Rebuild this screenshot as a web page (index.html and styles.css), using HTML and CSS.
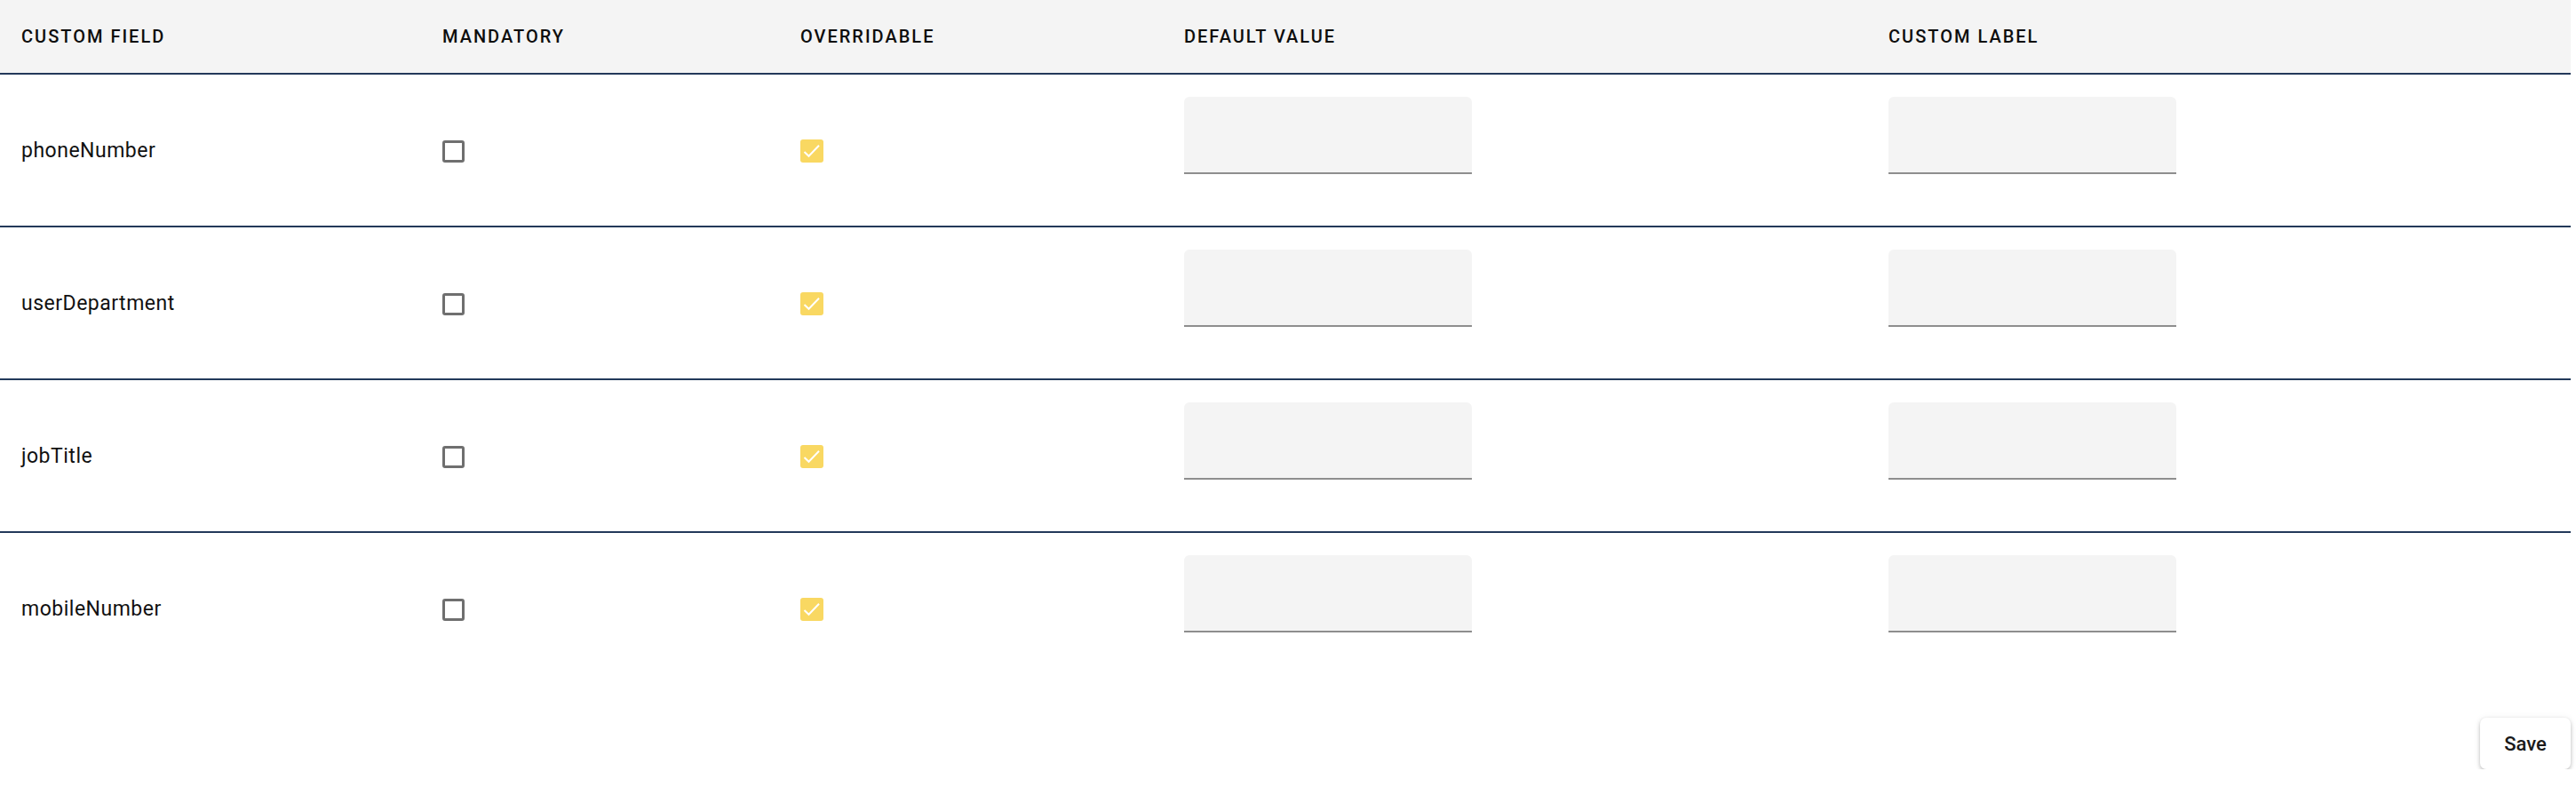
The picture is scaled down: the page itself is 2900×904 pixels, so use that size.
FILE: index.html
```html
<!DOCTYPE html>
<html lang="en">
<head>
<meta charset="utf-8">
<title>Custom fields</title>
<link rel="stylesheet" href="styles.css">
</head>
<body>
<div class="page">
  <div class="table">
    <div class="row head">
      <div class="cell">CUSTOM FIELD</div>
      <div class="cell">MANDATORY</div>
      <div class="cell">OVERRIDABLE</div>
      <div class="cell">DEFAULT VALUE</div>
      <div class="cell">CUSTOM LABEL</div>
    </div>
    <div class="row body">
      <div class="cell name">phoneNumber</div>
      <div class="cell"><span class="box"></span></div>
      <div class="cell"><span class="box checked"><svg viewBox="0 0 26 26" width="26" height="26"><path d="M4.5 14 L9.5 18.8 L21 6.8" fill="none" stroke="#fff" stroke-width="2"/></svg></span></div>
      <div class="cell field"><span class="input"></span></div>
      <div class="cell field"><span class="input"></span></div>
    </div>
    <div class="row body">
      <div class="cell name">userDepartment</div>
      <div class="cell"><span class="box"></span></div>
      <div class="cell"><span class="box checked"><svg viewBox="0 0 26 26" width="26" height="26"><path d="M4.5 14 L9.5 18.8 L21 6.8" fill="none" stroke="#fff" stroke-width="2"/></svg></span></div>
      <div class="cell field"><span class="input"></span></div>
      <div class="cell field"><span class="input"></span></div>
    </div>
    <div class="row body">
      <div class="cell name">jobTitle</div>
      <div class="cell"><span class="box"></span></div>
      <div class="cell"><span class="box checked"><svg viewBox="0 0 26 26" width="26" height="26"><path d="M4.5 14 L9.5 18.8 L21 6.8" fill="none" stroke="#fff" stroke-width="2"/></svg></span></div>
      <div class="cell field"><span class="input"></span></div>
      <div class="cell field"><span class="input"></span></div>
    </div>
    <div class="row body last">
      <div class="cell name">mobileNumber</div>
      <div class="cell"><span class="box"></span></div>
      <div class="cell"><span class="box checked"><svg viewBox="0 0 26 26" width="26" height="26"><path d="M4.5 14 L9.5 18.8 L21 6.8" fill="none" stroke="#fff" stroke-width="2"/></svg></span></div>
      <div class="cell field"><span class="input"></span></div>
      <div class="cell field"><span class="input"></span></div>
    </div>
  </div>
  <div class="actions">
    <button class="save" type="button">Save</button>
  </div>
</div>
</body>
</html>
```

FILE: styles.css
```css
html, body {
  margin: 0;
  padding: 0;
  background: #ffffff;
}
body {
  font-family: Roboto, "Liberation Sans", Arial, sans-serif;
  color: #111111;
}
.page {
  width: 2894px;
}
.table {
  display: flex;
  flex-direction: column;
}
.row {
  display: grid;
  grid-template-columns: 474px 403px 432px 793px 792px;
  border-bottom: 2px solid #23395a;
}
.row.last {
  border-bottom: none;
}
.head {
  height: 82px;
  background: #f4f4f4;
  align-items: center;
}
.head .cell {
  font-size: 20px;
  font-weight: 500;
  letter-spacing: 2px;
  color: #0d0d0d;
}
.cell {
  padding-left: 24px;
  display: flex;
  align-items: center;
}
.body {
  height: 170px;
}
.name {
  font-size: 23px;
  letter-spacing: 0.5px;
  color: #111111;
}
.box {
  display: block;
  width: 25px;
  height: 25px;
  box-sizing: border-box;
  border: 3px solid #6f6f6f;
  border-radius: 3px;
  margin-top: 2px;
}
.box.checked {
  width: 26px;
  height: 26px;
  border: none;
  background: #f9d862;
  border-radius: 3px;
}
.box svg {
  display: block;
}
.field {
  align-items: flex-start;
  padding-top: 25px;
}
.input {
  display: block;
  width: 324px;
  height: 85px;
  background: #f4f4f4;
  border-bottom: 2px solid #8e8e8e;
  border-radius: 6px 6px 0 0;
}
.actions {
  display: flex;
  justify-content: flex-end;
  padding-top: 38px;
}
.save {
  width: 102px;
  height: 58px;
  border: none;
  border-radius: 7px;
  background: #ffffff;
  box-shadow: 0 2px 4px rgba(0, 0, 0, 0.22), 0 1px 8px rgba(0, 0, 0, 0.08);
  font-family: Roboto, "Liberation Sans", Arial, sans-serif;
  font-size: 22px;
  font-weight: 500;
  color: #1a1a1a;
  padding: 0;
}
```
